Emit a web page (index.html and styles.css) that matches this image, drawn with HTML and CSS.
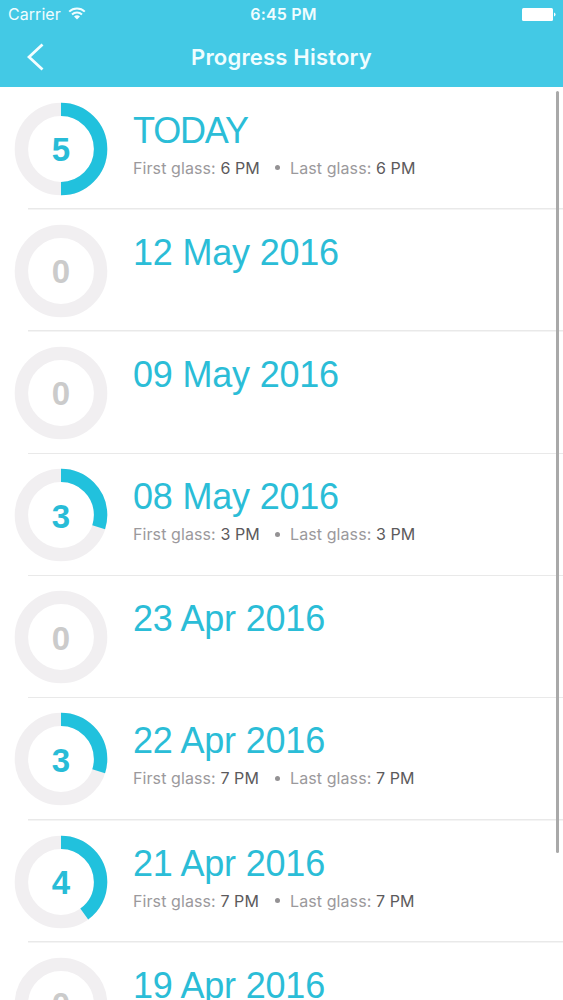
FILE: index.html
```html
<!DOCTYPE html>
<html lang="en">
<head>
  <meta charset="UTF-8" />
  <title>Progress History</title>
  <meta name="viewport" content="width=device-width, initial-scale=1.0" />
  <link rel="stylesheet" href="styles.css">
</head>
<body>
  <div class="screen">
    <header>
      <div class="status-bar">
        <div class="carrier">
          <span>Carrier</span>
          <svg class="wifi" width="18" height="13" viewBox="0 0 18 13">
            <path d="M1.2 4.6a11.2 11.2 0 0 1 15.6 0M4 7.5a7.2 7.2 0 0 1 10 0" fill="none" stroke="#f0fdff" stroke-width="2" />
            <path d="M9 12.6L6 9.6a4.3 4.3 0 0 1 6 0z" fill="#f0fdff" />
          </svg>
        </div>
        <div class="time">6:45 PM</div>
        <svg class="battery" width="34" height="13" viewBox="0 0 34 13">
          <rect x="0" y="0" width="31" height="13" rx="1.5" fill="#fff" />
          <path d="M32 4.5q1.5 .6 1.5 2t-1.5 2z" fill="#fff" />
        </svg>
      </div>
      <div class="nav-bar">
        <svg class="back" width="18" height="28" viewBox="0 0 18 28">
          <path d="M15.5 1.5L2 14l13.5 12.5" fill="none" stroke="#f4feff" stroke-width="2.8" />
        </svg>
        <h1>Progress History</h1>
      </div>
    </header>

    <ul class="history">
      <li class="day">
        <div class="ring">
          <svg viewBox="0 0 94 94"><circle class="track" cx="47" cy="47" r="39.6" /><circle class="fill" cx="47" cy="47" r="39.6" pathLength="100" stroke-dasharray="50 100" /></svg>
          <span class="count">5</span>
        </div>
        <div class="info">
          <h2 class="today">TODAY</h2>
          <p><span class="first">First glass: <b>6 PM</b></span><i class="dot"></i><span>Last glass: <b>6 PM</b></span></p>
        </div>
      </li>
      <li class="day empty">
        <div class="ring">
          <svg viewBox="0 0 94 94"><circle class="track" cx="47" cy="47" r="39.6" /></svg>
          <span class="count">0</span>
        </div>
        <div class="info"><h2>12 May 2016</h2></div>
      </li>
      <li class="day empty">
        <div class="ring">
          <svg viewBox="0 0 94 94"><circle class="track" cx="47" cy="47" r="39.6" /></svg>
          <span class="count">0</span>
        </div>
        <div class="info"><h2>09 May 2016</h2></div>
      </li>
      <li class="day">
        <div class="ring">
          <svg viewBox="0 0 94 94"><circle class="track" cx="47" cy="47" r="39.6" /><circle class="fill" cx="47" cy="47" r="39.6" pathLength="100" stroke-dasharray="30 100" /></svg>
          <span class="count">3</span>
        </div>
        <div class="info">
          <h2>08 May 2016</h2>
          <p><span class="first">First glass: <b>3 PM</b></span><i class="dot"></i><span>Last glass: <b>3 PM</b></span></p>
        </div>
      </li>
      <li class="day empty">
        <div class="ring">
          <svg viewBox="0 0 94 94"><circle class="track" cx="47" cy="47" r="39.6" /></svg>
          <span class="count">0</span>
        </div>
        <div class="info"><h2>23 Apr 2016</h2></div>
      </li>
      <li class="day">
        <div class="ring">
          <svg viewBox="0 0 94 94"><circle class="track" cx="47" cy="47" r="39.6" /><circle class="fill" cx="47" cy="47" r="39.6" pathLength="100" stroke-dasharray="30 100" /></svg>
          <span class="count">3</span>
        </div>
        <div class="info">
          <h2>22 Apr 2016</h2>
          <p><span class="first">First glass: <b>7 PM</b></span><i class="dot"></i><span>Last glass: <b>7 PM</b></span></p>
        </div>
      </li>
      <li class="day">
        <div class="ring">
          <svg viewBox="0 0 94 94"><circle class="track" cx="47" cy="47" r="39.6" /><circle class="fill" cx="47" cy="47" r="39.6" pathLength="100" stroke-dasharray="40 100" /></svg>
          <span class="count">4</span>
        </div>
        <div class="info">
          <h2>21 Apr 2016</h2>
          <p><span class="first">First glass: <b>7 PM</b></span><i class="dot"></i><span>Last glass: <b>7 PM</b></span></p>
        </div>
      </li>
      <li class="day empty">
        <div class="ring">
          <svg viewBox="0 0 94 94"><circle class="track" cx="47" cy="47" r="39.6" /></svg>
          <span class="count">0</span>
        </div>
        <div class="info"><h2>19 Apr 2016</h2></div>
      </li>
    </ul>
    <div class="scrollbar"></div>
  </div>
</body>
</html>
```
FILE: styles.css
```css
* { box-sizing: border-box; margin: 0; padding: 0; }

body {
  font-family: Inter, sans-serif;
  background: #fff;
}

.screen {
  position: relative;
  height: 1000px;
  overflow: hidden;
}

header {
  height: 87px;
  background: #43c9e5;
  color: #f0fdff;
}

.status-bar {
  display: grid;
  grid-template-columns: 1fr auto 1fr;
  align-items: center;
  height: 28px;
  padding: 0 7px 0 8px;
  font-size: 16px;
}

.carrier {
  display: flex;
  align-items: center;
  gap: 7px;
  letter-spacing: 0.05px;
}

.wifi {
  margin-top: -2px;
}

.time {
  padding-left: 3px;
  font-weight: 600;
  letter-spacing: 0.2px;
}

.battery {
  justify-self: end;
}

.nav-bar {
  display: grid;
  grid-template-columns: 1fr auto 1fr;
  align-items: center;
  height: 57px;
}

.back {
  margin-left: 27px;
}

.nav-bar h1 {
  font-size: 22px;
  font-weight: 600;
  letter-spacing: 0.2px;
}

.history {
  padding-top: 0.5px;
  list-style: none;
}

.day {
  display: flex;
  height: 122.2px;
  padding: 14px 0 0 14px;
  background: linear-gradient(#e9e9e9, #e9e9e9) 28px 100% / 100% 1.5px no-repeat;
}

.ring {
  display: grid;
  place-items: center;
  width: 94px;
  height: 94px;
}

.ring svg,
.count {
  grid-area: 1 / 1;
}

.ring circle {
  fill: none;
  stroke-width: 13.4;
}

.ring .track {
  stroke: #f1eff1;
}

.ring .fill {
  stroke: #21c1dd;
  transform: rotate(-90deg);
  transform-origin: center;
}

.count {
  font: bold 33px "Liberation Sans", sans-serif;
  color: #28bcd7;
  padding-top: 3px;
}

.empty .count {
  color: #cbcbcb;
}

.info {
  padding: 8px 0 0 25px;
}

.info h2 {
  font: 36px/42px "Liberation Sans", sans-serif;
  letter-spacing: -0.2px;
  color: #2bbdd7;
}

.info .today {
  letter-spacing: -1.2px;
}

.info p {
  display: flex;
  align-items: center;
  margin-top: 6px;
  font-size: 16px;
  line-height: 20px;
  letter-spacing: 0.09px;
  color: #9b999c;
}

.info .first {
  width: 142px;
}

.info b {
  font-weight: 400;
  color: #5c5a5c;
}

.dot {
  width: 5px;
  height: 5px;
  margin-right: 10px;
  border-radius: 50%;
  background: #949294;
}

/* overlays the list like the native indicator */
.scrollbar {
  position: absolute;
  top: 91px;
  right: 4px;
  width: 3px;
  height: 762px;
  border-radius: 2px;
  background: #a9a9a9;
}
```
